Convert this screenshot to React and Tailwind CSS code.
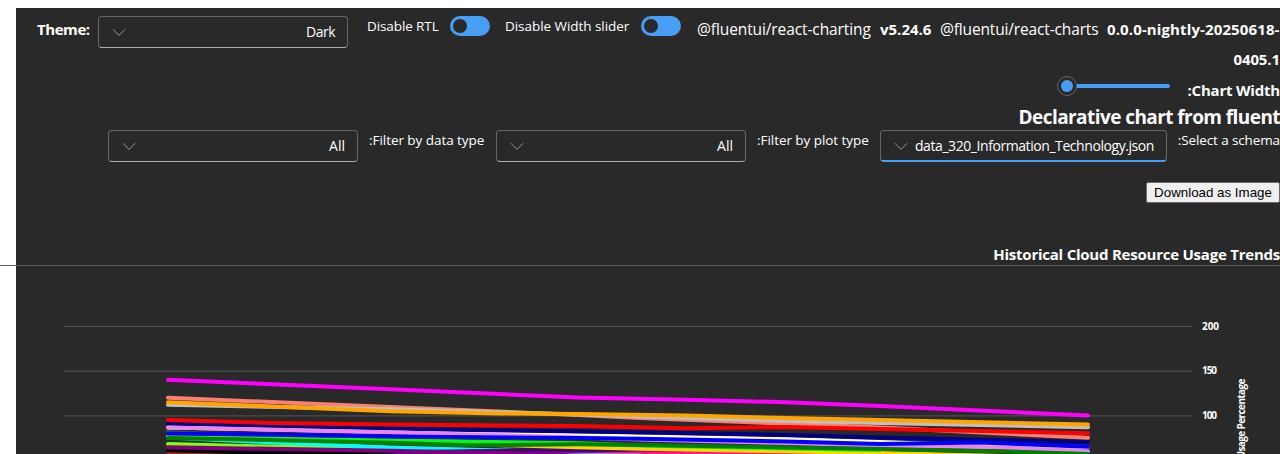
const series = [
  ['#fa8072', '168,397.7 390,407 578,415 640,418 770,423 880,427.5 1088,437.7'],
  ['#ffffff', '168,427.5 390,431.8 578,435.2 640,436.4 790,439.3 880,442 1000,446.2 1088,447'],
  ['#228b22', '168,432.5 300,437 390,440'],
  ['#c0c0c0', '168,404.8 390,409.3 578,414.5 640,416.5 786,421 880,423 1088,427.3'],
  ['#ffa500', '168,402.3 390,411.3 500,413.5 578,414 686,415.5 786,418 880,420 1088,424.5'],
  ['#000080', '168,423.5 390,428.6 470,430 640,432.2 786,435 880,437.5 1088,442'],
  ['#ff0000', '168,420 270,423 390,424.5 578,426 686,428.3 786,427 880,429 1088,433.3'],
  ['#ee82ee', '168,427.4 390,432.3 578,437.4 640,439.5 786,443 880,445.5 1000,447.5 1088,451.2'],
  ['#7fff00', '168,444 260,446.3 390,448'],
  ['#00ffff', '168,437.5 230,440.6 390,447.4 530,451.3 640,455'],
  ['#ff1493', '470,451.3 578,451.3 640,451.8 786,454 880,456'],
  ['#4b0082', '390,452.5 470,451.3 530,450.7 590,450.5 640,449.5 700,449.5'],
  ['#ffd700', '168,436.8 390,441.5 470,444.3 578,447.3 640,448.8 786,451.3 880,453 1088,458'],
  ['#00ff00', '168,437.5 390,440.5 578,443.3 640,445.5 786,448.5 880,450'],
  ['#0000ff', '168,433.4 390,436.4 578,438 640,438.7 786,441.5 880,444 980,442.5 1088,446.8'],
  ['#008000', '168,438 390,442.7 470,445.3 578,444.3 640,445 786,447.5 880,449 1000,451.3 1088,454'],
  ['#000000', '168,451 390,454.7'],
  ['#a52a2a', '168,454.3 390,460'],
  ['#800080', '168,447.3 390,450.7 520,453.5 640,458'],
  ['#ff00ff', '168,379.8 390,389.2 578,397.5 686,399.8 786,402.2 880,406 1088,415.5'],
]

function Chevron() {
  return (
    <svg className="h-5 w-5 shrink-0" viewBox="0 0 20 20" fill="none" stroke="#999999" strokeWidth="1">
      <path d="M4.2 7.6 L10 13.4 L15.8 7.6" strokeLinecap="round" strokeLinejoin="round" />
    </svg>
  )
}

function Dropdown({ className, children }) {
  return (
    <div
      className={`flex h-8 shrink-0 items-center rounded border border-[#666666] pl-[10px] pr-[12px] text-sm text-white ${className}`}
    >
      <Chevron />
      <span className="ml-auto whitespace-nowrap">{children}</span>
    </div>
  )
}

function Toggle() {
  return (
    <div className="mt-2 flex h-5 w-10 shrink-0 items-center rounded-full bg-[#479ef5] px-[3px]">
      <div className="h-[14px] w-[14px] rounded-full bg-[#292929]" />
    </div>
  )
}

export default function App() {
  return (
    <div className="relative h-[454px] w-[1280px] overflow-hidden bg-white pl-4 pt-2 font-['Open_Sans','Noto_Sans',sans-serif] text-white">
      <div className="flex h-[446px] flex-col bg-[#292929]">
        <div className="flex h-[66px] shrink-0 items-start">
          <div className="ml-[21px] mt-[10px] w-[61px] whitespace-nowrap text-[15px] font-bold leading-[22px] tracking-[-0.44px]">
            Theme:
          </div>
          <Dropdown className="mt-2 w-[250px] border-b-[#adadad] tracking-[-0.5px]">Dark</Dropdown>
          <div className="ml-[19px] mt-2 w-[83px] whitespace-nowrap text-[13.5px] leading-5 tracking-[-0.1px]">Disable RTL</div>
          <Toggle />
          <div className="ml-[15px] mt-2 w-[136px] whitespace-nowrap text-[13.5px] leading-5 tracking-[-0.05px]">
            Disable Width slider
          </div>
          <Toggle />
          <div className="ml-auto mt-[6px] text-right text-[15px] leading-[30px]">
            <div className="flex whitespace-nowrap">
              <span className="w-[183px] text-left text-[15.5px] tracking-[-0.1px]">@fluentui/react-charting</span>
              <b className="w-[60px] text-left">v5.24.6</b>
              <span className="w-[167px] text-left text-[15.5px] tracking-[-0.15px]">@fluentui/react-charts</span>
              <b className="w-[173px] text-left tracking-[0.12px]">0.0.0-nightly-20250618-</b>
            </div>
            <b className="tracking-[-0.1px]">0405.1</b>
          </div>
        </div>
        <div className="flex h-[31px] shrink-0 justify-end">
          <div className="mt-[2px] flex h-5 w-[113px] items-center">
            <div className="flex h-5 w-5 shrink-0 items-center justify-center rounded-full border border-[#666666] bg-[#292929]">
              <div className="h-3 w-3 rounded-full bg-[#479ef5]" />
            </div>
            <div className="h-1 flex-1 rounded-r-full bg-[#479ef5]" />
          </div>
          <div className="ml-[17px] mt-[5px] w-[93px] whitespace-nowrap text-right text-[15px] font-bold leading-[22px] tracking-[-0.2px]">
            :Chart Width
          </div>
        </div>
        <div className="h-[25px] shrink-0 whitespace-nowrap text-right text-[19px] font-bold leading-6 tracking-[-0.57px]">
          Declarative chart from fluent
        </div>
        <div className="flex h-8 shrink-0 justify-end text-[13.5px] leading-5">
          <Dropdown className="w-[250px] border-b-[#adadad]">All</Dropdown>
          <div className="ml-[11px] w-[127px] whitespace-nowrap font-medium tracking-[-0.05px]">:Filter by data type</div>
          <Dropdown className="w-[250px] border-b-[#adadad]">All</Dropdown>
          <div className="ml-[11px] w-[123px] whitespace-nowrap font-medium tracking-[-0.05px]">:Filter by plot type</div>
          <Dropdown className="w-[287px] border-b-2 border-b-[#479ef5] tracking-[-0.43px]">data_320_Information_Technology.json</Dropdown>
          <div className="w-[113px] whitespace-nowrap text-right font-medium tracking-[-0.12px]">:Select a schema</div>
        </div>
        <div className="mt-5 flex h-[21px] shrink-0 justify-end">
          <button className="h-[21px] w-[134px] whitespace-nowrap rounded-[2px] border border-[#6b6b6b] bg-[#efefef] font-['Liberation_Sans',sans-serif] text-[13.333px] leading-[19px] text-black">
            Download as Image
          </button>
        </div>
        <div className="mt-10 h-[22px] shrink-0 whitespace-nowrap text-right text-[15px] font-bold leading-[22px] tracking-[-0.23px]">
          Historical Cloud Resource Usage Trends
        </div>
        <svg className="h-[189px] w-[1264px] shrink-0" viewBox="16 265 1264 189" fill="none">
          {[326.4, 371.2, 415.9].map((y) => (
            <path key={y} d={`M64 ${y}H1192`} stroke="#555555" strokeWidth="1" />
          ))}
          {series.map(([color, points], i) => (
            <polyline key={i} points={points} stroke={color} strokeWidth="4" strokeLinecap="round" />
          ))}
          <g fill="#ffffff" className="text-[10px] font-bold">
            <text x="1202" y="330" textLength="17">200</text>
            <text x="1202" y="374.3" textLength="15">150</text>
            <text x="1202" y="419" textLength="15">100</text>
            <text transform="translate(1245 458.5) rotate(-90)" textLength="80">Usage Percentage</text>
          </g>
        </svg>
      </div>
      <div className="absolute left-0 top-[265px] h-px w-full bg-[#5c5c5c]" />
    </div>
  )
}
